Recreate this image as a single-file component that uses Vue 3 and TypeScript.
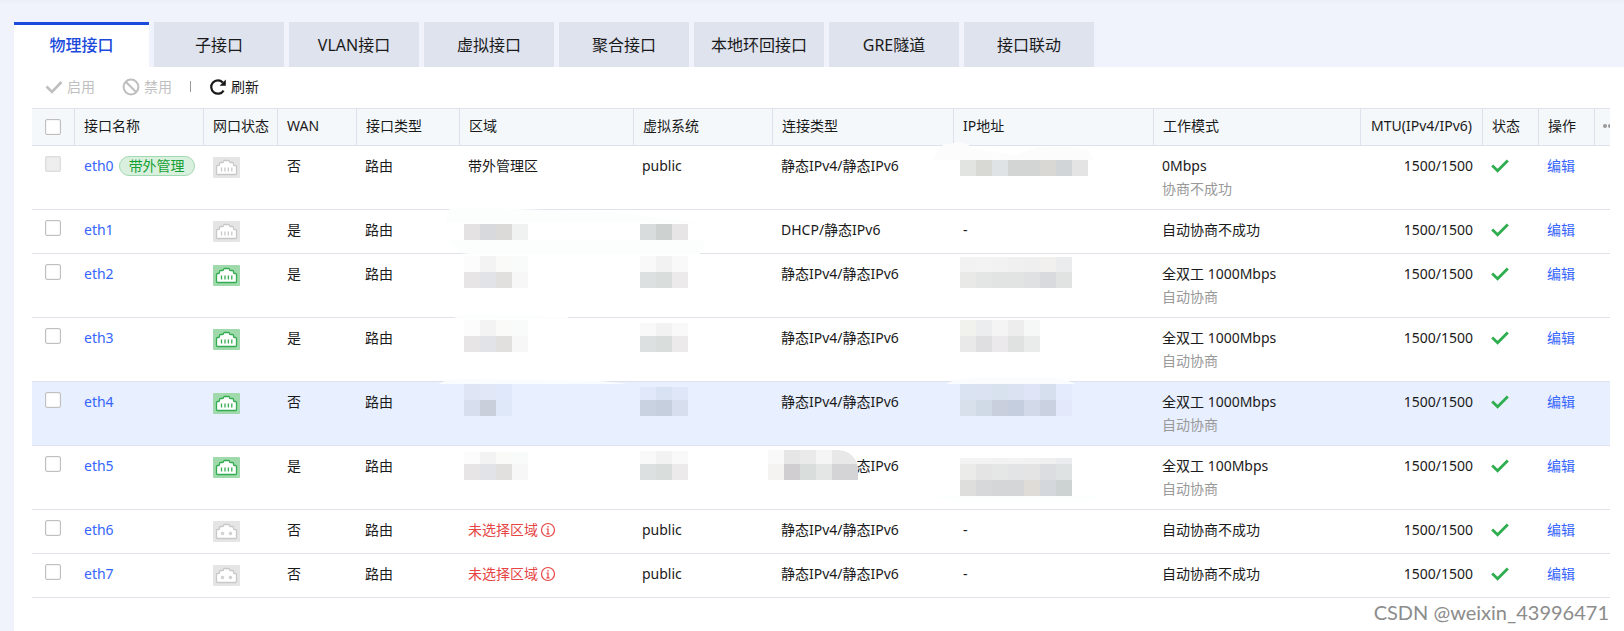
<script setup lang="ts">
import { computed, ref } from 'vue'

type PortKind = 'copper' | 'fiber'
type ColumnKey = 'zone' | 'vsys' | 'link' | 'ip'

interface MaskBand {
  y: number
  h: number
  colors: string[]
}

interface Mask {
  x: number
  bands: MaskBand[]
  smear?: string
  smearColor?: string
  clipped?: boolean
}

interface Iface {
  name: string
  badge?: string
  locked?: boolean
  port: PortKind
  up: boolean
  wan: string
  zone?: string
  zoneMissing?: boolean
  vsys?: string
  link: string
  ip?: string
  mode: string
  modeNote?: string
  masks?: Partial<Record<ColumnKey, Mask>>
}

const STATIC = '静态IPv4/静态IPv6'

const tabs = ['物理接口', '子接口', 'VLAN接口', '虚拟接口', '聚合接口', '本地环回接口', 'GRE隧道', '接口联动']
const activeTab = ref('物理接口')

const zoneLight = ['#fcfcfc', '#f3f3f3', '#fafaf9', '#f9fafa']
const zoneDark = ['#e7e5e6', '#e2e3e8', '#e1e0de', '#f7f7f7']
const vsysLight = ['#f9f9f9', '#f2f2f2', '#f9f9f9']
const vsysDark = ['#dde0e1', '#d9dedd', '#eceaeb']

function twoBands(x: number, y: number, light: string[], dark: string[], split = 18): Mask {
  return {
    x,
    bands: [
      { y, h: split - y, colors: light },
      { y: split, h: 16, colors: dark },
    ],
  }
}

const rows: Iface[] = [
  {
    name: 'eth0', badge: '带外管理', locked: true, port: 'copper', up: false, wan: '否',
    zone: '带外管理区', vsys: 'public', link: STATIC, mode: '0Mbps', modeNote: '协商不成功',
    masks: {
      ip: {
        x: 6,
        bands: [{ y: 14, h: 16, colors: ['#e2e4e2', '#d8d8d5', '#dfe3e5', '#d3d5d4', '#d3d5d4', '#d9d8d4', '#d2d5d8', '#e4e4e4'] }],
        smear: 'M-20 14Q-18 4 -11 -1L5 -4L15 -1V2L60 9L85 1Q120 -1 134 4L140 14Z',
        smearColor: '#fcfcfc',
      },
    },
  },
  {
    name: 'eth1', port: 'copper', up: false, wan: '是', link: 'DHCP/静态IPv6', ip: '-', mode: '自动协商不成功',
    masks: {
      zone: {
        x: 4,
        bands: [{ y: 14, h: 16, colors: ['#e5e2e3', '#d7d9dd', '#dbdad9', '#f0f2f1'] }],
        smear: 'M-16 13L-10 -2H28L150 2L240 13ZM-10 30H246L240 44L10 44L0 43Z',
        smearColor: '#fcfdfd',
      },
      vsys: { x: 6, bands: [{ y: 14, h: 16, colors: ['#d9dcdc', '#cdd1d0', '#e7e5e6'] }] },
    },
  },
  {
    name: 'eth2', port: 'copper', up: true, wan: '是', link: STATIC, mode: '全双工 1000Mbps', modeNote: '自动协商',
    masks: {
      zone: twoBands(4, 2, zoneLight, zoneDark),
      vsys: twoBands(6, 2, vsysLight, vsysDark),
      ip: twoBands(
        6, 3,
        ['#f2f2f2', '#f2f3f2', '#f1f2f1', '#f0f0f0', '#efefef', '#f1f0ee', '#ebecee'],
        ['#e9e9e7', '#e4e5e5', '#e2e4e3', '#e2e4e3', '#e0e1e2', '#d9dadd', '#e0e3e2'],
      ),
    },
  },
  {
    name: 'eth3', port: 'copper', up: true, wan: '是', link: STATIC, mode: '全双工 1000Mbps', modeNote: '自动协商',
    masks: {
      zone: { ...twoBands(4, 2, zoneLight, zoneDark), smear: 'M-8 1Q0 -4 20 -4L70 -2L108 -1V1Z', smearColor: '#fcfdfd' },
      vsys: twoBands(6, 5, vsysLight, vsysDark),
      ip: twoBands(
        6, 2,
        ['#f1f1ee', '#ecedef', '#f4f4f5', '#ededee', '#f6f7f7'],
        ['#e9e9ea', '#dfdfe2', '#ece9ed', '#dfe2e1', '#eaebeb'],
      ),
    },
  },
  {
    name: 'eth4', port: 'copper', up: true, wan: '否', link: STATIC, mode: '全双工 1000Mbps', modeNote: '自动协商',
    masks: {
      zone: {
        ...twoBands(4, 2, ['#dfe5f5', '#e1e7f6', '#dfe9fb'], ['#d7deee', '#c9cfdb', '#dfe8f9']),
        smear: 'M-22 2L-12 -2L6 -3L140 -1L168 2Z',
        smearColor: '#fafcfe',
      },
      vsys: twoBands(6, 5, ['#e1e8f9', '#d9e2f3', '#dfe6f7'], ['#c8d2e1', '#c5cfdd', '#d7deed']),
      ip: {
        ...twoBands(
          6, 2,
          ['#dae3f1', '#dbe3f2', '#d8e1ee', '#dbe2f1', '#dfe5f6', '#d5dfee', '#e4ebfc'],
          ['#d8e0eb', '#d0dae7', '#c9cfdc', '#c5cede', '#d2daea', '#cad1e0', '#e3e9fb'],
        ),
        smear: 'M-8 2Q0 -3 20 -4H106L122 2Z',
        smearColor: '#fafcfe',
      },
    },
  },
  {
    name: 'eth5', port: 'copper', up: true, wan: '是', link: STATIC, mode: '全双工 100Mbps', modeNote: '自动协商',
    masks: {
      zone: twoBands(4, 6, zoneLight, zoneDark),
      vsys: twoBands(6, 5, vsysLight, vsysDark),
      link: {
        ...twoBands(
          -5, 4,
          ['#f9f9f9', '#e6e6e6', '#e9eae9', '#f5f5f5', '#e8e8e8', '#e8e8e8'],
          ['#f4f3f2', '#d0ced1', '#d9dddc', '#e4e6e5', '#d4d3d5', '#d4d3d5'],
        ),
        clipped: true,
      },
      ip: {
        x: 6,
        bands: [
          { y: 12, h: 6, colors: ['#f3f3f3', '#f3f3f3', '#f2f2f2', '#f3f3f3', '#f2f2f2', '#f0f0f1', '#ebecef'] },
          { y: 18, h: 16, colors: ['#ebebea', '#e4e4e4', '#e5e6e6', '#e3e4e5', '#e4e4e5', '#dcdde0', '#dfe2e2'] },
          { y: 34, h: 16, colors: ['#dededc', '#d7d8da', '#d5d6d8', '#d5d6d8', '#dfdcd7', '#d4d7db', '#cdd2d2'] },
        ],
        smear: 'M-26 50H148L130 56H0Z',
        smearColor: '#fdfefe',
      },
    },
  },
  { name: 'eth6', port: 'fiber', up: false, wan: '否', zone: '未选择区域', zoneMissing: true, vsys: 'public', link: STATIC, ip: '-', mode: '自动协商不成功' },
  { name: 'eth7', port: 'fiber', up: false, wan: '否', zone: '未选择区域', zoneMissing: true, vsys: 'public', link: STATIC, ip: '-', mode: '自动协商不成功' },
]

const dataColumns: ColumnKey[] = ['zone', 'vsys', 'link', 'ip']
const hovered = ref('eth4')
const selected = ref<string[]>([])
const selectable = rows.filter((r) => !r.locked).map((r) => r.name)
const allSelected = computed({
  get: () => selected.value.length === selectable.length,
  set: (on: boolean) => {
    selected.value = on ? [...selectable] : []
  },
})
</script>

<template>
  <main class="page">
    <nav class="tabs" role="tablist" aria-label="接口">
      <button
        v-for="tab in tabs"
        :key="tab"
        type="button"
        role="tab"
        class="tab"
        :class="{ active: tab === activeTab }"
        :aria-selected="tab === activeTab"
        @click="activeTab = tab"
      >{{ tab }}</button>
    </nav>

    <section class="panel">
      <div class="toolbar">
        <button type="button" class="tool" :disabled="!selected.length">
          <svg width="18" height="18" viewBox="0 0 18 18" fill="none" stroke="currentColor" stroke-width="2.6">
            <path d="M1.5 8.5L7 14L16.5 4" />
          </svg>
          启用
        </button>
        <button type="button" class="tool" :disabled="!selected.length">
          <svg width="18" height="18" viewBox="0 0 18 18" fill="none" stroke="currentColor" stroke-width="2">
            <circle cx="9" cy="9" r="7.4" /><path d="M4 4L14 14" />
          </svg>
          禁用
        </button>
        <span class="divider"></span>
        <button type="button" class="tool">
          <svg width="18" height="18" viewBox="0 0 18 18">
            <path d="M14.6 12.6A6.7 6.7 0 1 1 13.8 4.4" fill="none" stroke="currentColor" stroke-width="2.2" />
            <path d="M16.8 1.6V7.8H10.6Z" fill="currentColor" />
          </svg>
          刷新
        </button>
      </div>

      <div class="grid">
        <table>
          <colgroup>
            <col class="c-check" /><col class="c-name" /><col class="c-port" /><col class="c-wan" />
            <col class="c-type" /><col class="c-zone" /><col class="c-vsys" /><col class="c-link" />
            <col class="c-ip" /><col class="c-mode" /><col class="c-mtu" /><col class="c-act" />
            <col class="c-act" /><col class="c-more" />
          </colgroup>
          <thead>
            <tr>
              <th class="check"><input v-model="allSelected" type="checkbox" aria-label="全选" /></th>
              <th>接口名称</th>
              <th>网口状态</th>
              <th>WAN</th>
              <th>接口类型</th>
              <th>区域</th>
              <th>虚拟系统</th>
              <th>连接类型</th>
              <th>IP地址</th>
              <th>工作模式</th>
              <th class="num">MTU(IPv4/IPv6)</th>
              <th>状态</th>
              <th>操作</th>
              <th class="more">
                <button type="button" aria-label="更多列">
                  <svg width="16" height="4" viewBox="0 0 16 4" fill="currentColor">
                    <circle cx="2" cy="2" r="2" /><circle cx="7" cy="2" r="2" /><circle cx="12" cy="2" r="2" />
                  </svg>
                </button>
              </th>
            </tr>
          </thead>
          <tbody>
            <tr
              v-for="row in rows"
              :key="row.name"
              :class="{ hovered: row.name === hovered }"
              @mouseenter="hovered = row.name"
            >
              <td class="check">
                <input v-model="selected" type="checkbox" :value="row.name" :disabled="row.locked" :aria-label="row.name" />
              </td>
              <td class="lead">
                <div class="name">
                  <a href="#">{{ row.name }}</a>
                  <span v-if="row.badge" class="badge">{{ row.badge }}</span>
                </div>
              </td>
              <td class="lead">
                <svg class="port" :class="{ up: row.up }" width="27" height="21" viewBox="0 0 27 21">
                  <rect class="port-bg" width="27" height="21" rx="1" />
                  <path
                    class="port-body"
                    d="M3.5 16.5V9.5Q3.5 8.5 4.5 8.5H5.5Q6.5 8.5 6.5 7.5V6.5Q6.5 5.5 7.5 5.5H9.5Q10.5 5.5 10.5 4.5Q10.5 3.5 11.5 3.5H15.5Q16.5 3.5 16.5 4.5Q16.5 5.5 17.5 5.5H19.5Q20.5 5.5 20.5 6.5V7.5Q20.5 8.5 21.5 8.5H22.5Q23.5 8.5 23.5 9.5V16.5Q23.5 17.5 22.5 17.5H4.5Q3.5 17.5 3.5 16.5Z"
                  />
                  <path v-if="row.port === 'copper'" class="port-pins" d="M8.5 10.4V14.6M12 10.4V14.6M15.4 10.4V14.6M18.8 10.4V14.6" />
                  <template v-else>
                    <circle class="port-hole" cx="9.5" cy="12.5" r="1.2" />
                    <circle class="port-hole" cx="17.5" cy="12.5" r="1.2" />
                  </template>
                </svg>
              </td>
              <td class="lead">{{ row.wan }}</td>
              <td>路由</td>
              <td v-for="key in dataColumns" :key="key" class="data" :class="{ lead: key === 'ip' }">
                <span v-if="key === 'zone' && row.zoneMissing" class="missing">
                  {{ row.zone }}
                  <svg width="16" height="16" viewBox="0 0 16 16" fill="none" stroke="currentColor">
                    <circle cx="8" cy="8" r="6.5" stroke-width="1.2" />
                    <path d="M8 4V5.6M6.6 7.2H8V11.8M6.4 11.8H9.6" stroke-width="1.2" />
                  </svg>
                </span>
                <template v-else>{{ row[key] }}</template>
                <svg v-if="row.masks?.[key]" class="mask" :class="{ clipped: row.masks[key]!.clipped }" width="95" height="44">
                  <path v-if="row.masks[key]!.smear" :d="row.masks[key]!.smear" :fill="row.masks[key]!.smearColor" />
                  <g v-for="band in row.masks[key]!.bands" :key="band.y">
                    <rect
                      v-for="(color, i) in band.colors"
                      :key="i"
                      :x="row.masks[key]!.x + i * 16"
                      :y="band.y"
                      width="16"
                      :height="band.h"
                      :fill="color"
                    />
                  </g>
                </svg>
              </td>
              <td>
                {{ row.mode }}
                <div v-if="row.modeNote" class="note">{{ row.modeNote }}</div>
              </td>
              <td class="num">1500/1500</td>
              <td>
                <svg class="ok" width="18" height="18" viewBox="0 0 18 18" fill="none" stroke="currentColor" stroke-width="2.8">
                  <path d="M1.2 8.6L6.6 13.8L16.8 3.6" />
                </svg>
              </td>
              <td><a href="#">编辑</a></td>
              <td></td>
            </tr>
          </tbody>
        </table>
      </div>
      <p class="watermark">CSDN @weixin_43996471</p>
    </section>
  </main>
</template>

<style>
body {
  margin: 0;
}
</style>

<style scoped>
.page {
  box-sizing: border-box;
  display: flex;
  flex-direction: column;
  min-height: 100vh;
  padding: 22px 0 0 14px;
  background: linear-gradient(#ebeef6, #f0f3fc 4px);
  color: #1a1a1a;
  font: 14px/23px "Noto Sans", "Noto Sans CJK SC", sans-serif;
}

button {
  font: inherit;
  color: inherit;
  border: 0;
  padding: 0;
  background: none;
}

.tabs {
  display: flex;
  gap: 5px;
}

.tab {
  box-sizing: border-box;
  width: 130px;
  height: 45px;
  background: #dfe3ee;
  font-size: 16px;
  line-height: 24px;
  white-space: nowrap;
}

.tab.active {
  width: 135px;
  padding-bottom: 3px;
  border-top: 3px solid #1c4adb;
  background: #fff;
  color: #1c4adb;
  font-weight: 500;
}

.panel {
  display: flex;
  flex: 1;
  flex-direction: column;
  background: #fff;
}

.toolbar {
  box-sizing: border-box;
  display: flex;
  align-items: center;
  height: 41px;
  padding: 0 0 2px 31px;
}

.tool {
  display: flex;
  align-items: center;
  gap: 4px;
}

.tool:disabled {
  margin-right: 27px;
  color: #bfbfbf;
}

.divider {
  width: 1px;
  height: 11px;
  margin: 0 18px 0 -9px;
  background: #999;
}

.grid {
  margin: 0 14px 0 18px;
  overflow: hidden;
}

table {
  width: 100%;
  table-layout: fixed;
  border-spacing: 0;
}

.c-check { width: 43px; }
.c-name { width: 129px; }
.c-port { width: 74px; }
.c-wan { width: 79px; }
.c-type { width: 103px; }
.c-zone { width: 174px; }
.c-vsys { width: 139px; }
.c-link { width: 181px; }
.c-ip { width: 200px; }
.c-mtu { width: 122px; }
.c-act { width: 56px; }
.c-more { width: 15px; }

th,
td {
  box-sizing: border-box;
  border-bottom: 1px solid #dfe2ec;
  text-align: left;
  white-space: nowrap;
}

th {
  height: 38px;
  padding: 0 9px 3px;
  border-top: 1px solid #dfe2ec;
  border-right: 1px solid #dfe2ec;
  background: #f4f8fb;
  font-weight: 400;
}

th:last-child {
  border-right: 0;
}

td {
  height: 44px;
  padding: 8px 8px 9px;
  vertical-align: top;
}

.lead {
  padding-left: 9px;
}

.hovered td {
  background: #e8efff;
}

.num {
  padding-right: 10px;
  text-align: right;
}

.check {
  padding: 10px 0 0 13px;
}

th.check {
  padding-top: 0;
}

.check input {
  appearance: none;
  display: block;
  box-sizing: border-box;
  width: 16px;
  height: 16px;
  margin: 0;
  border: 1px solid #bfbfbf;
  border-radius: 2px;
  background: #fff;
  box-shadow: inset 0 0 2px #ddd;
}

.check input:checked {
  background: #3665fd;
}

.check input:disabled {
  border-color: #dcdcdc;
  background: #eee;
}

.more {
  padding: 0 0 2px 8px;
  overflow: hidden;
  color: #999;
}

.more button,
.more svg {
  display: block;
}

a {
  color: #3665fd;
  text-decoration: none;
}

.name {
  display: flex;
  align-items: center;
  gap: 5px;
}

.badge {
  box-sizing: border-box;
  height: 20px;
  padding: 0 9px;
  border: 1px solid #a3d9b0;
  border-radius: 10px;
  background: #daf0df;
  color: #16a034;
  line-height: 18px;
}

.port {
  display: block;
  margin-top: 3px;
}

.port-bg { fill: #e5e5e5; }
.port-body { fill: #fff; stroke: #c8c8c8; stroke-width: 1.3; }
.port-pins { stroke: #c8c8c8; stroke-width: 1.3; }
.port-hole { fill: #ddd; stroke: #c4c4c4; }
.up .port-bg { fill: #9fd9ac; }
.up .port-body { stroke: #34ac50; }
.up .port-pins { stroke: #34ac50; }

.data {
  position: relative;
}

.mask {
  position: absolute;
  z-index: 1;
  top: 0;
  left: 0;
  overflow: visible;
  pointer-events: none;
}

.mask.clipped {
  clip-path: inset(4px 10px 0 -5px round 0 20px 0 0);
}

.missing {
  display: flex;
  align-items: center;
  gap: 2px;
  color: #e54545;
}

.note {
  color: #999;
}

.ok {
  display: block;
  margin-top: 3px;
  color: #2fae50;
}

.watermark {
  margin: auto 15px 7px 0;
  color: #8c8c8c;
  font: 20px/24px Lato, "Liberation Sans", sans-serif;
  text-align: right;
  text-shadow: -1px -1px 0 #fff;
}
</style>
